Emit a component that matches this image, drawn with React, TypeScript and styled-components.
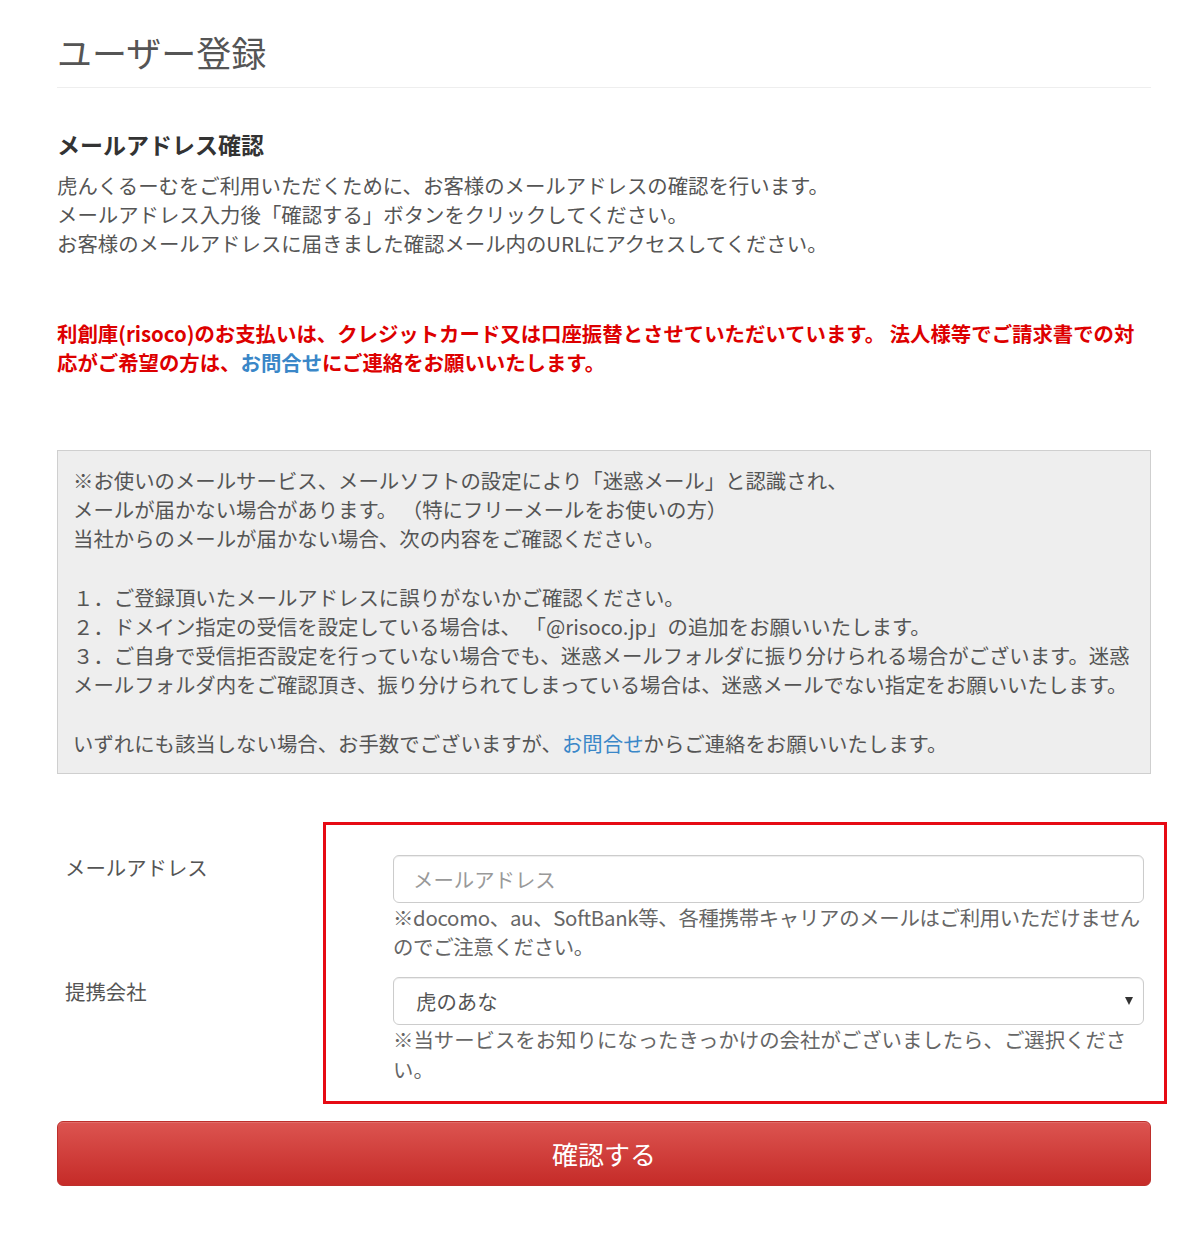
import React from 'react';
import styled, { createGlobalStyle } from 'styled-components';

const GlobalStyle = createGlobalStyle`
  html, body {
    margin: 0;
    padding: 0;
    background: #fff;
  }
  body {
    font-family: "Noto Sans CJK JP", "Noto Sans", sans-serif;
    font-size: 20.4px;
    line-height: 29.2px;
    color: #555;
  }
`;

const Page = styled.div`
  width: 1094px;
  padding: 33px 0 60px 57px;
`;

const Title = styled.h1`
  margin: 0;
  padding-bottom: 16px;
  border-bottom: 1px solid #eee;
  font-size: 35px;
  line-height: 38px;
  font-weight: 400;
  color: #555;
`;

const SectionHeading = styled.h4`
  margin: 44px 0 14px;
  font-size: 23px;
  line-height: 25px;
  font-weight: 700;
  color: #333;
`;

const Text = styled.p`
  margin: 0;
`;

const Notice = styled.p`
  margin: 60px 0 0;
  color: #dd0000;
  font-weight: 700;
`;

const Link = styled.a`
  color: #3a87c8;
  text-decoration: none;
`;

const InfoBox = styled.div`
  margin-top: 73px;
  padding: 15px;
  background: #eeeeee;
  border: 1px solid #cfcfcf;
`;

const FormArea = styled.div`
  display: grid;
  grid-template-columns: 266px 1fr;
  margin-top: 48px;
  margin-right: -16px;
`;

const LabelColumn = styled.div`
  display: flex;
  flex-direction: column;
  padding: 31px 0 0 8px;
`;

const Label = styled.label`
  height: 124px;
  color: #555;
`;

const Frame = styled.div`
  border: 3px solid #e60a14;
  padding: 30px 20px 17px 67px;
`;

const Field = styled.div<{ $gap?: boolean }>`
  margin-top: ${p => (p.$gap ? '16px' : '0')};
`;

const Input = styled.input`
  box-sizing: border-box;
  display: block;
  width: 100%;
  height: 48px;
  padding: 0 19px;
  border: 1px solid #ccc;
  border-radius: 6px;
  box-shadow: inset 0 1px 1px rgba(0, 0, 0, 0.075);
  font-family: inherit;
  font-size: 20.4px;
  color: #555;
  &::placeholder {
    color: #999;
  }
`;

const SelectWrap = styled.div`
  position: relative;
`;

const Select = styled.select`
  box-sizing: border-box;
  display: block;
  width: 100%;
  height: 48px;
  padding: 0 22px;
  border: 1px solid #ccc;
  border-radius: 6px;
  background: #fff;
  box-shadow: inset 0 1px 1px rgba(0, 0, 0, 0.075);
  appearance: none;
  font-family: inherit;
  font-size: 20.4px;
  color: #555;
`;

const Arrow = styled.span`
  position: absolute;
  right: 11px;
  top: 20px;
  width: 0;
  height: 0;
  border-left: 4px solid transparent;
  border-right: 4px solid transparent;
  border-top: 8px solid #333;
  pointer-events: none;
`;

const Help = styled.p<{ $tight?: boolean }>`
  margin: 0;
  color: #666;
  letter-spacing: ${p => (p.$tight ? '-0.3px' : 'normal')};
`;

const SubmitButton = styled.button`
  display: block;
  width: 100%;
  height: 65px;
  margin-top: 17px;
  border: 1px solid #bd2f2b;
  border-radius: 6px;
  background: linear-gradient(#dc5450, #c52b28);
  box-shadow: inset 0 1px 0 rgba(255, 255, 255, 0.15);
  color: #fff;
  font-family: inherit;
  font-size: 26px;
  cursor: pointer;
`;

const App = () => {
  return (
    <>
      <GlobalStyle />
      <Page>
        <Title>ユーザー登録</Title>
        <SectionHeading>メールアドレス確認</SectionHeading>
        <Text>
          虎んくるーむをご利用いただくために、お客様のメールアドレスの確認を行います。
          <br />
          メールアドレス入力後「確認する」ボタンをクリックしてください。
          <br />
          お客様のメールアドレスに届きました確認メール内のURLにアクセスしてください。
        </Text>
        <Notice>
          利創庫(risoco)のお支払いは、クレジットカード又は口座振替とさせていただいています。 法人様等でご請求書での対
          <br />
          応がご希望の方は、<Link href="#">お問合せ</Link>にご連絡をお願いいたします。
        </Notice>
        <InfoBox>
          ※お使いのメールサービス、メールソフトの設定により「迷惑メール」と認識され、
          <br />
          メールが届かない場合があります。 （特にフリーメールをお使いの方）
          <br />
          当社からのメールが届かない場合、次の内容をご確認ください。
          <br />
          <br />
          １．ご登録頂いたメールアドレスに誤りがないかご確認ください。
          <br />
          ２．ドメイン指定の受信を設定している場合は、 「@risoco.jp」の追加をお願いいたします。
          <br />
          ３．ご自身で受信拒否設定を行っていない場合でも、迷惑メールフォルダに振り分けられる場合がございます。迷惑
          <br />
          メールフォルダ内をご確認頂き、振り分けられてしまっている場合は、迷惑メールでない指定をお願いいたします。
          <br />
          <br />
          いずれにも該当しない場合、お手数でございますが、<Link href="#">お問合せ</Link>からご連絡をお願いいたします。
        </InfoBox>
        <FormArea>
          <LabelColumn>
            <Label htmlFor="email">メールアドレス</Label>
            <Label htmlFor="partner">提携会社</Label>
          </LabelColumn>
          <Frame>
            <Field>
              <Input id="email" type="email" placeholder="メールアドレス" />
              <Help $tight>
                ※docomo、au、SoftBank等、各種携帯キャリアのメールはご利用いただけません
                <br />
                のでご注意ください。
              </Help>
            </Field>
            <Field $gap>
              <SelectWrap>
                <Select id="partner" defaultValue="toranoana">
                  <option value="toranoana">虎のあな</option>
                </Select>
                <Arrow />
              </SelectWrap>
              <Help>
                ※当サービスをお知りになったきっかけの会社がございましたら、ご選択くださ
                <br />
                い。
              </Help>
            </Field>
          </Frame>
        </FormArea>
        <SubmitButton type="button">確認する</SubmitButton>
      </Page>
    </>
  );
};

export default App;
